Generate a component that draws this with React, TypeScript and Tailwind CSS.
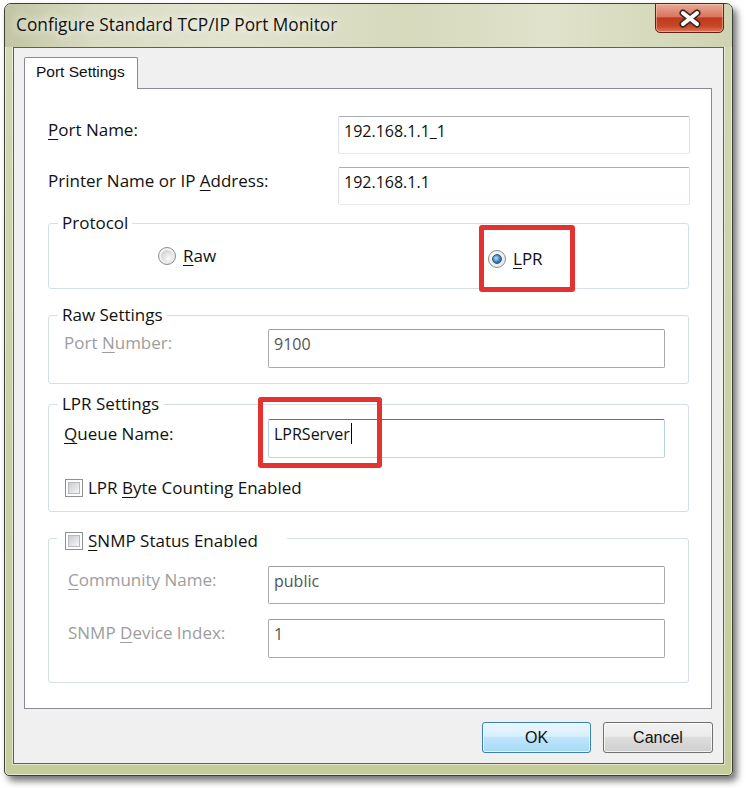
import React from "react";

const FONT = "[font-family:'Open_Sans','Noto_Sans',sans-serif]";
const ARIAL = "[font-family:'Liberation_Sans',Arial,sans-serif]";

function U({ children }: { children: React.ReactNode }) {
  return <span className="underline decoration-1 underline-offset-[3px]">{children}</span>;
}

function Field({
  children,
  w,
  h,
  variant = "normal",
  caret = false,
}: {
  children: React.ReactNode;
  w: string;
  h: string;
  variant?: "normal" | "disabled" | "focused";
  caret?: boolean;
}) {
  const border =
    variant === "normal"
      ? "border-t-[#abadb3] border-x-[#dfe1e6] border-b-[#e3e9ef]"
      : variant === "disabled"
      ? "border-[#a7a9ab] border-t-[#9a9c9f]"
      : "border-t-[#3d7bad] border-x-[#b5cfe7] border-b-[#b7d9ed]";
  const text = variant === "disabled" ? "text-[#555]" : "text-[#111]";
  return (
    <div className={`${w} ${h} shrink-0 rounded-[2px] border bg-white pl-[5px] pt-[3px] text-[16px] leading-[22px] ${border} ${text}`}>
      <span className="relative">
        {children}
        {caret && <span className="absolute right-[-2px] top-[0px] h-[21px] w-px bg-black" />}
      </span>
    </div>
  );
}

function Legend({ children }: { children: React.ReactNode }) {
  return (
    <div className="absolute left-[9px] top-[-12px] bg-white px-[4px] leading-[22px] text-[#111]">{children}</div>
  );
}

function Checkbox() {
  return (
    <span className="flex h-[18px] w-[18px] shrink-0 items-center justify-center border border-[#8e8f8f] bg-white">
      <span className="h-[12px] w-[12px] border border-[#b7babe] bg-gradient-to-br from-[#c9ccd1] to-[#f7f7f7]" />
    </span>
  );
}

function Radio({ checked }: { checked?: boolean }) {
  return (
    <span className="flex h-[18px] w-[18px] shrink-0 items-center justify-center rounded-full border border-[#8c8e8e] bg-[radial-gradient(circle_at_40%_35%,#ffffff,#e2e2e2)]">
      {checked ? (
        <span className="h-[10px] w-[10px] rounded-full border border-[#26567f] bg-[radial-gradient(circle_at_40%_40%,#b6e2fb,#3b7fbe_55%,#1b4d7c)]" />
      ) : (
        <span className="h-[12px] w-[12px] rounded-full bg-[radial-gradient(circle_at_65%_70%,#fafafa,#c4c6c9)]" />
      )}
    </span>
  );
}

function RedBox({ pos }: { pos: string }) {
  return <div className={`pointer-events-none absolute rounded-[3px] border-[5px] border-[#e3322f] ${pos}`} />;
}

export default function App() {
  return (
    <div className={`min-h-screen bg-white pl-[4px] pt-[3px] text-[17px] ${FONT}`}>
      <div className="relative flex h-[773px] w-[729px] flex-col rounded-t-[7px] rounded-b-[5px] border border-[#3d3f3b] bg-[linear-gradient(180deg,#d4d8b4_0%,#cdd2a8_40%,#c6cc9a_100%)] px-[8px] pb-[11px] shadow-[4px_5px_7px_rgba(0,0,0,0.55),inset_0_0_0_1px_rgba(255,255,255,0.55)]">
        {/* title bar */}
        <div className="relative -mx-[8px] flex h-[43px] shrink-0 items-center rounded-t-[6px] bg-[linear-gradient(90deg,#c2c5a3_0%,#d9dbc2_12%,#e2e4cf_30%,#d6d9bc_55%,#e0e2cb_75%,#d0d3b1_100%)] pb-[2px] pl-[11px]">
          <span className="text-[17.3px] leading-[24px] text-[#111] [text-shadow:0_0_8px_rgba(255,255,255,0.9),0_0_14px_rgba(255,255,255,0.7)]">
            Configure Standard TCP/IP Port Monitor
          </span>
        </div>
        {/* close button */}
        <div className="absolute right-[8px] top-[-1px] flex h-[30px] w-[69px] items-center justify-center rounded-b-[5px] border border-[#5c2418] bg-[linear-gradient(180deg,#e8a996_0%,#d9765f_45%,#c0391c_50%,#c8472a_80%,#dc7a5a_100%)] shadow-[inset_0_0_0_1px_rgba(255,220,200,0.45)]">
          <svg width="24" height="19" viewBox="0 0 24 19">
            <path d="M5 4 L19 15 M19 4 L5 15" stroke="#3b2620" strokeWidth="7" strokeLinecap="round" fill="none" />
            <path d="M5 4 L19 15 M19 4 L5 15" stroke="#ffffff" strokeWidth="4" strokeLinecap="round" fill="none" />
          </svg>
        </div>

        {/* client area */}
        <div className="flex flex-1 flex-col border border-[#5e6159] bg-[#f0f0f0] shadow-[0_0_0_1px_rgba(255,255,255,0.5)]">
          {/* tab */}
          <div className={`relative z-10 -mb-px ml-[10px] mt-[9px] h-[32px] w-[114px] rounded-t-[2px] border border-b-0 border-[#898c95] bg-white pl-[11px] pt-[4px] text-[15.5px] leading-[20px] text-[#111] ${ARIAL}`}>
            Port Settings
          </div>
          {/* panel */}
          <div className="ml-[10px] flex h-[621px] w-[688px] flex-col border border-[#898c95] bg-white pl-[23px] text-[#111]">
            <div className="mt-[27px] flex h-[38px] items-start">
              <div className="w-[290px] pt-[3px] leading-[22px]">
                <U>P</U>ort Name:
              </div>
              <Field w="w-[352px]" h="h-[38px]">192.168.1.1_1</Field>
            </div>
            <div className="mt-[13px] flex h-[38px] items-start">
              <div className="w-[290px] pt-[3px] leading-[22px]">
                Printer Name or IP <U>A</U>ddress:
              </div>
              <Field w="w-[352px]" h="h-[38px]">192.168.1.1</Field>
            </div>

            {/* Protocol */}
            <div className="relative mt-[18px] h-[66px] w-[641px] shrink-0 rounded-[3px] border border-[#d5dfe5]">
              <Legend>Protocol</Legend>
              <div className="flex items-start pl-[109px] pt-[21px]">
                <div className="flex h-[22px] w-[330px] items-center gap-[7px] leading-[22px]">
                  <Radio />
                  <span>
                    <U>R</U>aw
                  </span>
                </div>
                <div className="mt-[3px] flex h-[22px] items-center gap-[7px] leading-[22px]">
                  <Radio checked />
                  <span>
                    <U>L</U>PR
                  </span>
                </div>
              </div>
              <RedBox pos="left-[430px] top-[1px] w-[96px] h-[67px]" />
            </div>

            {/* Raw Settings */}
            <div className="relative mt-[26px] h-[69px] w-[641px] shrink-0 rounded-[3px] border border-[#d5dfe5]">
              <Legend>Raw Settings</Legend>
              <div className="flex items-start pl-[15px] pt-[13px]">
                <div className="w-[204px] pt-[3px] leading-[22px] text-[#9d9d9d]">
                  Port <U>N</U>umber:
                </div>
                <Field w="w-[397px]" h="h-[39px]" variant="disabled">
                  9100
                </Field>
              </div>
            </div>

            {/* LPR Settings */}
            <div className="relative mt-[20px] h-[108px] w-[641px] shrink-0 rounded-[3px] border border-[#d5dfe5]">
              <Legend>LPR Settings</Legend>
              <div className="flex items-start pl-[15px] pt-[14px]">
                <div className="w-[204px] pt-[4px] leading-[22px]">
                  <U>Q</U>ueue Name:
                </div>
                <Field w="w-[397px]" h="h-[39px]" variant="focused" caret>
                  LPRServer
                </Field>
              </div>
              <div className="ml-[16px] mt-[20px] flex h-[20px] items-center gap-[5px] leading-[22px]">
                <Checkbox />
                <span>
                  LPR <U>B</U>yte Counting Enabled
                </span>
              </div>
              <RedBox pos="left-[209px] top-[-8px] w-[124px] h-[71px]" />
            </div>

            {/* SNMP */}
            <div className="relative mt-[26px] h-[145px] w-[641px] shrink-0 rounded-[3px] border border-[#d5dfe5]">
              <div className="absolute left-[8px] top-[-10px] flex h-[24px] w-[230px] items-center gap-[5px] bg-white pl-[8px] leading-[22px]">
                <Checkbox />
                <span>
                  <U>S</U>NMP Status Enabled
                </span>
              </div>
              <div className="flex items-start pl-[19px] pt-[27px]">
                <div className="w-[200px] pt-[3px] leading-[22px] text-[#9d9d9d]">
                  <U>C</U>ommunity Name:
                </div>
                <Field w="w-[397px]" h="h-[38px]" variant="disabled">
                  public
                </Field>
              </div>
              <div className="mt-[15px] flex items-start pl-[19px]">
                <div className="w-[200px] pt-[3px] leading-[22px] text-[#9d9d9d]">
                  SNMP <U>D</U>evice Index:
                </div>
                <Field w="w-[397px]" h="h-[39px]" variant="disabled">
                  1
                </Field>
              </div>
            </div>
          </div>

          {/* buttons */}
          <div className={`mr-[10px] mt-[13px] flex justify-end gap-[12px] text-[16px] ${ARIAL}`}>
            <div className="flex h-[31px] w-[109px] items-center justify-center rounded-[3px] border border-[#3c7fb1] bg-[linear-gradient(180deg,#eaf6fd_0%,#d9f0fc_45%,#bee6fd_50%,#a7d9f5_100%)] text-[#111] shadow-[inset_0_0_0_1px_rgba(255,255,255,0.7)]">
              OK
            </div>
            <div className="flex h-[31px] w-[110px] items-center justify-center rounded-[3px] border border-[#707070] bg-[linear-gradient(180deg,#f2f2f2_0%,#ebebeb_45%,#dddddd_50%,#cfcfcf_100%)] text-[#111] shadow-[inset_0_0_0_1px_rgba(255,255,255,0.7)]">
              Cancel
            </div>
          </div>
        </div>
      </div>
    </div>
  );
}
